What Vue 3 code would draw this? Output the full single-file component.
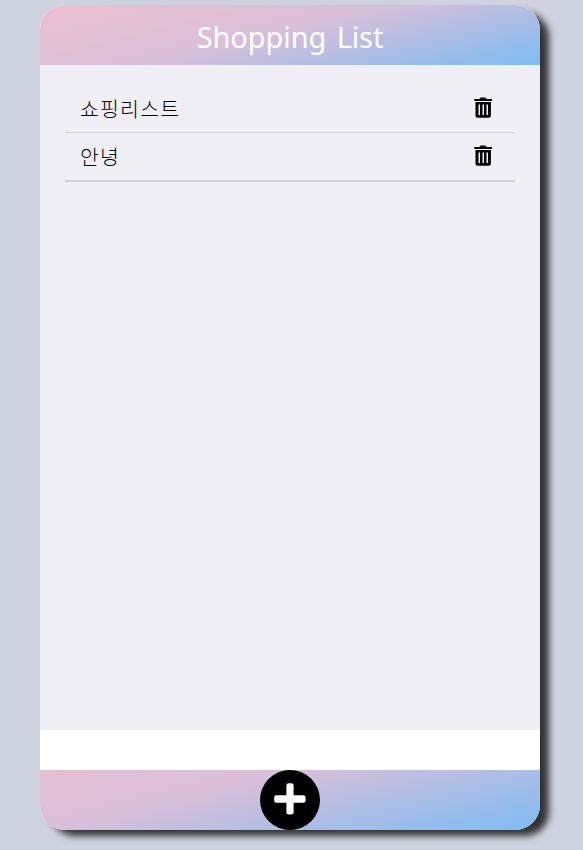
<script setup>
import { ref } from 'vue'

const items = ref(['쇼핑리스트', '안녕'])

function remove(index) {
  items.value.splice(index, 1)
}
</script>

<template>
  <div class="page">
    <section class="card">
      <header class="header">
        <h1 class="title">Shopping List</h1>
      </header>
      <ul class="items">
        <li v-for="(item, index) in items" :key="item" class="item">
          <div class="row">
            <span class="name">{{ item }}</span>
            <button class="delete" @click="remove(index)">
              <svg width="18" height="21" viewBox="0 0 18 21">
                <path fill="#000" d="M.3 1.900h5.100L6.500.4h5l1.100 1.500H18v2H.3z" />
                <path fill="#000" fill-rule="evenodd" d="M1.500 5h15.400v13.500a2.200 2.200 0 0 1-2.200 2.200H3.700a2.200 2.200 0 0 1-2.200-2.200zM4.500 7.500v10.500h1.500V7.500zM8.500 7.500v10.500h1.500V7.500zM12.500 7.500v10.500H14V7.500z" />
              </svg>
            </button>
          </div>
        </li>
      </ul>
      <div class="entry"></div>
      <footer class="footer">
        <button class="add">
          <svg width="32" height="32" viewBox="0 0 32 32" fill="#fff">
            <rect x="12.400" y="0.200" width="7.200" height="31.400" rx="2.300" />
            <rect x="0.200" y="12.200" width="31.400" height="7.600" rx="2.300" />
          </svg>
        </button>
      </footer>
    </section>
  </div>
</template>

<style>
body {
  margin: 0;
  background: #cfd3df;
}
</style>

<style scoped>
.page {
  box-sizing: border-box;
  height: 850px;
  padding: 5px 0 0 40px;
  overflow: hidden;
  background: #cfd3df;
  font-family: "Noto Sans", "Noto Sans CJK KR", sans-serif;
}

.card {
  display: flex;
  flex-direction: column;
  width: 500px;
  height: 825px;
  border-radius: 25px;
  background: #fff;
  box-shadow: 10px 7px 7px -1px rgba(0, 0, 0, 0.76);
}

.header,
.footer {
  display: flex;
  justify-content: center;
  height: 60px;
}

.header {
  border-radius: 25px 25px 0 0;
  background: linear-gradient(166deg, #edc0d0 0%, #dabfd9 45%, #7dbcf4 100%);
}

.footer {
  border-radius: 0 0 25px 25px;
  background: linear-gradient(166deg, #e6bfd4 0%, #dabfd9 33%, #7dbcf4 100%);
}

.title {
  margin: 0;
  padding-top: 2px;
  color: #fff;
  font-size: 29px;
  font-weight: 400;
  line-height: 60px;
  letter-spacing: -0.1px;
  word-spacing: 3px;
  white-space: nowrap;
}

.items {
  box-sizing: border-box;
  height: 665px;
  margin: 0;
  padding: 20px 25px 0;
  list-style: none;
  background: #f0eff5;
}

.item {
  height: 47px;
  border-bottom: 1px solid #d2d1d6;
}

.item:last-child {
  border-bottom-width: 2px;
}

.row {
  display: flex;
  justify-content: space-between;
  align-items: center;
  height: 47px;
  padding: 0 23px 0 15px;
}

.name {
  font-family: "Noto Sans CJK KR", sans-serif;
  font-size: 20.500px;
  font-weight: 300;
  line-height: 47px;
  letter-spacing: 1.200px;
}

.delete,
.add {
  display: flex;
  padding: 0;
  border: 0;
  cursor: pointer;
}

.delete {
  margin-bottom: 3px;
  background: none;
}

.entry {
  height: 40px;
}

.add {
  box-sizing: border-box;
  justify-content: center;
  width: 60px;
  height: 60px;
  padding-top: 13px;
  border-radius: 50%;
  background: #000;
}
</style>
